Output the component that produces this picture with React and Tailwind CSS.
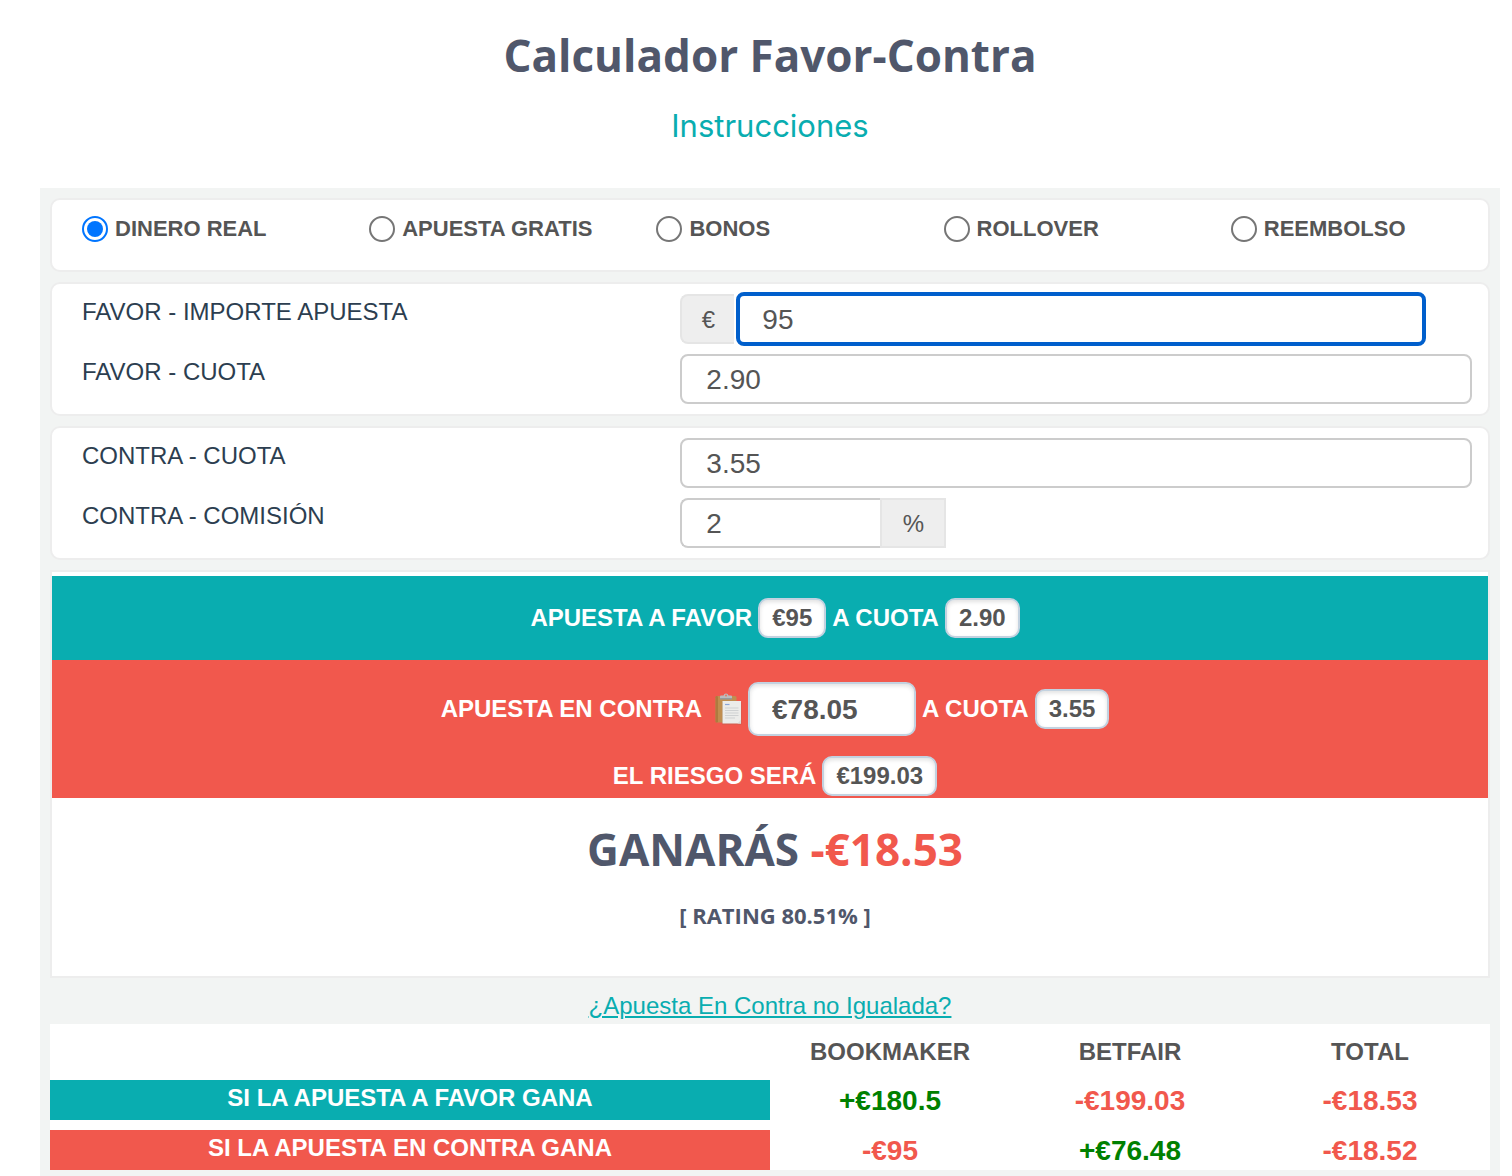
import { useState } from 'react';

const MODES = ['DINERO REAL', 'APUESTA GRATIS', 'BONOS', 'ROLLOVER', 'REEMBOLSO'];

const RESULTS = [
  {
    label: 'SI LA APUESTA A FAVOR GANA',
    color: 'bg-[#09adb0]',
    values: ['+€180.5', '-€199.03', '-€18.53'],
  },
  {
    label: 'SI LA APUESTA EN CONTRA GANA',
    color: 'bg-[#f1584d]',
    values: ['-€95', '+€76.48', '-€18.52'],
  },
];

function Field({ id, label, children }) {
  return (
    <div className="grid grid-cols-12">
      <label htmlFor={id} className="col-span-5 pl-[30px] text-2xl leading-9 text-[#2c3e50]">
        {label}
      </label>
      <div className="col-span-7 flex pl-[30px] pr-4">{children}</div>
    </div>
  );
}

function Chip({ children }) {
  return (
    <span className="h-10 rounded-[10px] border-2 border-[#c3d2e0] bg-white px-3 leading-9 text-[#555] shadow-[inset_0_2px_4px_rgba(0,0,0,0.12)]">
      {children}
    </span>
  );
}

function ClipboardIcon() {
  return (
    <svg viewBox="0 0 27 32" className="h-8 w-[27px]" aria-hidden="true">
      <rect x="0.5" y="3" width="21" height="26.500" rx="1.500" fill="#c08e50" />
      <rect x="0.5" y="3" width="2.500" height="26.500" rx="1.200" fill="#ad7a3f" />
      <path d="M5 6V3.500Q5 2.500 6 2.500H8.500Q9 0.500 11 0.500T13.500 2.500H16Q17 2.500 17 3.500V6Z" fill="#b9bcbd" />
      <path d="M5 5H17V6.500H5Z" fill="#969a9b" />
      <circle cx="11" cy="2.500" r="1" fill="#e9765f" />
      <path d="M7 9H26.500V31.500H7Z" fill="#8b6a50" opacity="0.35" />
      <path d="M7.500 8H26V30.500H7.500Z" fill="#ececea" />
      <path d="M26 26.500L22.500 30.500H26Z" fill="#dcdcda" />
      <path d="M10 11.500H14.500" stroke="#8ba6d8" strokeWidth="1.200" />
      <path d="M10 15H23.500M10 17.500H23.500M10 20H23.500M10 22.500H23.500M10 25H20" stroke="#cfd1d2" strokeWidth="1" />
    </svg>
  );
}

const inputClass =
  'h-[50px] w-full min-w-0 border-2 border-[#ccc] bg-white px-6 pt-0.5 text-[28px] text-[#555] outline-none';
const addonClass =
  'flex h-[50px] items-center justify-center border-2 border-[#e5e5e5] bg-[#eee] pt-0.5 text-2xl text-[#555]';
const cardClass = 'rounded-[10px] border-2 border-[#ededed] bg-white';

export default function App() {
  const [mode, setMode] = useState(MODES[0]);

  return (
    <div className="min-h-screen bg-white pl-10 pr-3 font-['Liberation_Sans',Arial,sans-serif]">
      <header className="flex flex-col items-center pb-[42px] pt-[25px] text-center">
        <h1 className="font-['Open_Sans',sans-serif] text-[44px] font-bold leading-[60px] text-[#50576b]">
          Calculador Favor-Contra
        </h1>
        <a href="#instrucciones" className="mt-[21px] font-['Inter',sans-serif] text-[31px] leading-10 text-[#09adb0]">
          Instrucciones
        </a>
      </header>

      <main className="flex flex-col gap-2.5 bg-[#f2f4f3] px-2.5 pb-1.5 pt-2.5">
        <div className={`grid grid-cols-5 pb-7 pt-4 ${cardClass}`}>
          {MODES.map((m) => (
            <label key={m} className="flex items-center gap-[7px] whitespace-nowrap pl-[30px] text-[22px] font-bold leading-[26px] text-[#555]">
              <input
                type="radio"
                name="mode"
                checked={mode === m}
                onChange={() => setMode(m)}
                className="size-[26px] shrink-0 appearance-none rounded-full border-2 border-[#767676] bg-clip-content p-[3px] checked:border-[#0075ff] checked:bg-[#0075ff]"
              />
              {m}
            </label>
          ))}
        </div>

        <div className={`flex flex-col gap-2.5 py-2.5 ${cardClass}`}>
          <Field id="stake" label="FAVOR - IMPORTE APUESTA">
            <span className={`w-[54px] shrink-0 rounded-l-lg border-r-0 ${addonClass}`}>€</span>
            <input
              id="stake"
              type="text"
              defaultValue="95"
              className="-my-0.5 ml-0.5 mr-[46px] h-[54px] w-full min-w-0 rounded-lg border-4 border-[#005fcc] bg-white px-[22px] pt-0.5 text-[28px] text-[#555] outline-none"
            />
          </Field>
          <Field id="back-odds" label="FAVOR - CUOTA">
            <input id="back-odds" type="text" defaultValue="2.90" className={`rounded-lg ${inputClass}`} />
          </Field>
        </div>

        <div className={`flex flex-col gap-2.5 py-2.5 ${cardClass}`}>
          <Field id="lay-odds" label="CONTRA - CUOTA">
            <input id="lay-odds" type="text" defaultValue="3.55" className={`rounded-lg ${inputClass}`} />
          </Field>
          <Field id="commission" label="CONTRA - COMISIÓN">
            <div className="w-[200px]">
              <input id="commission" type="text" defaultValue="2" className={`rounded-l-lg border-r-0 ${inputClass}`} />
            </div>
            <span className={`w-[66px] shrink-0 ${addonClass}`}>%</span>
          </Field>
        </div>

        <section className="border-2 border-[#ededed] bg-white pt-1 text-center text-2xl font-bold">
          <div className="flex items-center justify-center gap-1.5 bg-[#09adb0] py-[22px] pl-2.5 text-white">
            <span>APUESTA A FAVOR</span>
            <Chip>€95</Chip>
            <span>A CUOTA</span>
            <Chip>2.90</Chip>
          </div>
          <div className="bg-[#f1584d] pb-0.5 pl-2.5 pt-[22px] text-white">
            <div className="flex items-center justify-center gap-1.5">
              <label htmlFor="lay-stake">APUESTA EN CONTRA</label>
              <button type="button" aria-label="Copiar" className="flex w-[34px] justify-end">
                <ClipboardIcon />
              </button>
              <input
                id="lay-stake"
                type="text"
                readOnly
                value="€78.05"
                className="h-[54px] w-[168px] rounded-[10px] border-2 border-[#c3d2e0] bg-white px-[22px] pt-0.5 text-[28px] text-[#555] shadow-[inset_0_2px_4px_rgba(0,0,0,0.12)] outline-none"
              />
              <span>A CUOTA</span>
              <Chip>3.55</Chip>
            </div>
            <div className="mt-5 flex items-center justify-center gap-1.5">
              <span>EL RIESGO SERÁ</span>
              <Chip>€199.03</Chip>
            </div>
          </div>
          <div className="pb-[46px] pl-2.5 pt-[21px] font-['Open_Sans',sans-serif] text-[#50576b]">
            <h2 className="text-[44px] leading-[60px]">
              GANARÁS <span className="text-[#f1584d]">-€18.53</span>
            </h2>
            <p className="mt-[21px] text-[22px] leading-[30px]">[ RATING 80.51% ]</p>
          </div>
        </section>

        <div>
          <div className="flex h-9 items-center justify-center">
            <a href="#no-igualada" className="text-2xl text-[#09adb0] underline">
              ¿Apuesta En Contra no Igualada?
            </a>
          </div>
          <table className="w-full table-fixed bg-white text-center font-bold text-[#555]">
            <thead>
              <tr className="h-14 text-2xl">
                <td className="w-1/2"></td>
                <th scope="col">BOOKMAKER</th>
                <th scope="col">BETFAIR</th>
                <th scope="col">TOTAL</th>
              </tr>
            </thead>
            <tbody>
              {RESULTS.map((row, i) => (
                <tr key={row.label}>
                  <th scope="row" className={`p-0 ${i > 0 ? 'pt-2.5' : ''}`}>
                    <div className={`h-10 text-2xl leading-9 text-white ${row.color}`}>{row.label}</div>
                  </th>
                  {row.values.map((v, j) => (
                    <td
                      key={j}
                      className={`text-[28px] leading-[38px] ${i > 0 ? 'pt-3' : 'pt-0.5'} ${
                        v.startsWith('+') ? 'text-[#008000]' : 'text-[#f1584d]'
                      }`}
                    >
                      {v}
                    </td>
                  ))}
                </tr>
              ))}
            </tbody>
          </table>
        </div>
      </main>
    </div>
  );
}
